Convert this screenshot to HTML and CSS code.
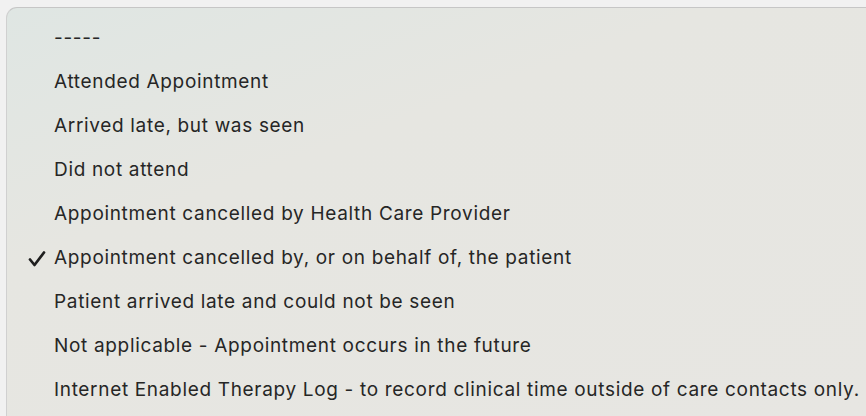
FILE: index.html
```html
<!DOCTYPE html>
<html>
<head>
<meta charset="utf-8">
<link rel="stylesheet" href="styles.css">
</head>
<body>
<div class="menu">
  <div class="item">-----</div>
  <div class="item">Attended Appointment</div>
  <div class="item">Arrived late, but was seen</div>
  <div class="item">Did not attend</div>
  <div class="item">Appointment cancelled by Health Care Provider</div>
  <div class="item checked"><svg class="check" width="20" height="20" viewBox="0 0 20 20"><path d="M3 10.5 L7.5 16 L17 3.5" fill="none" stroke="#1f1f1f" stroke-width="2.7" stroke-linecap="round" stroke-linejoin="round"/></svg>Appointment cancelled by, or on behalf of, the patient</div>
  <div class="item">Patient arrived late and could not be seen</div>
  <div class="item">Not applicable - Appointment occurs in the future</div>
  <div class="item">Internet Enabled Therapy Log - to record clinical time outside of care contacts only.</div>
</div>
</body>
</html>
```
FILE: styles.css
```css
html, body {
  margin: 0;
  padding: 0;
  width: 866px;
  height: 416px;
  overflow: hidden;
  background: #f1f1f1;
}
body {
  padding: 7px 0 0 6px;
  box-sizing: border-box;
}
.menu {
  height: 420px;
  border-top: 1px solid #c6c6c6;
  border-left: 1px solid #d0d0d0;
  border-top-left-radius: 11px;
  background: linear-gradient(160deg, #dfe6e3 0%, #e6e6e1 35%, #e7e6e2 100%);
  padding-top: 8px;
  box-sizing: border-box;
  font-family: Inter, "Noto Sans", sans-serif;
  font-size: 19px;
  color: #262626;
}
.item {
  position: relative;
  height: 44px;
  line-height: 44px;
  padding-left: 47px;
  white-space: nowrap;
  letter-spacing: 0.67px;
}
.check {
  position: absolute;
  left: 20px;
  top: 13px;
}
```
